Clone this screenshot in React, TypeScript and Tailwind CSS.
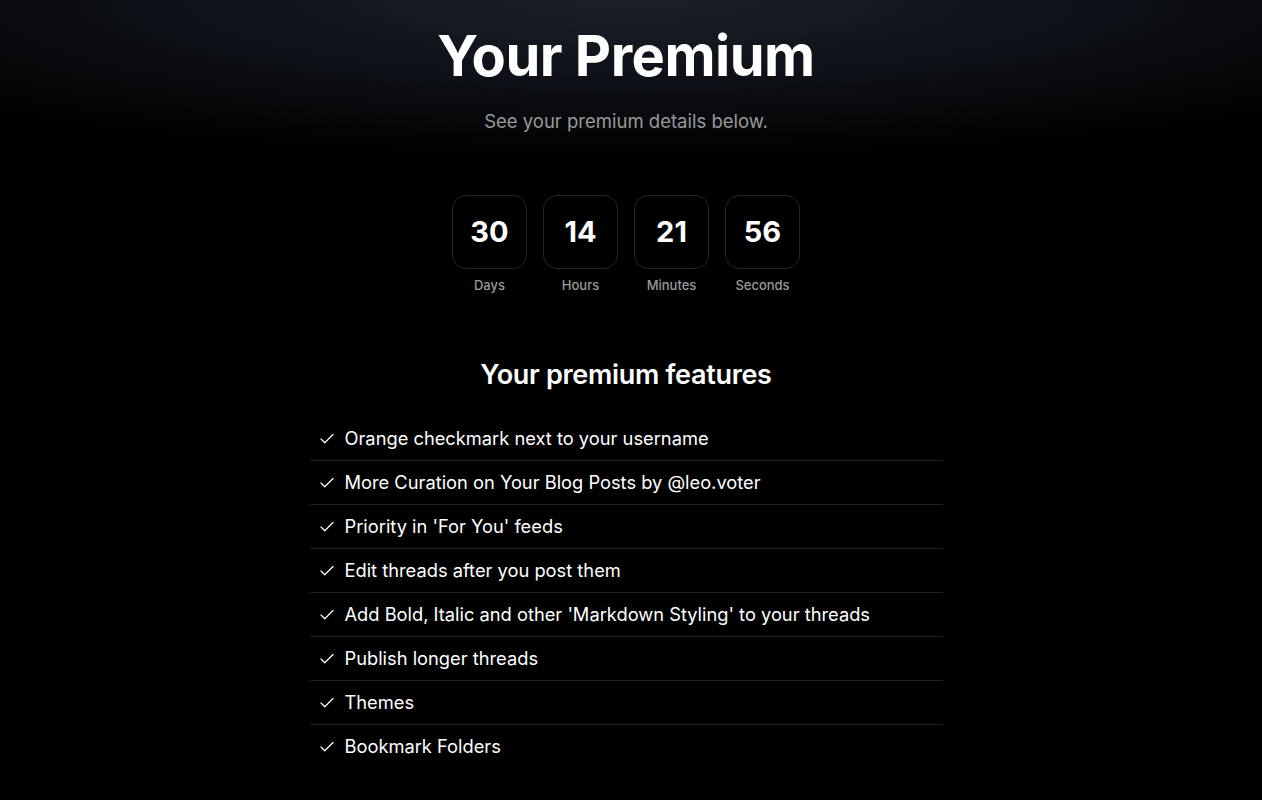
import React from "react";

const features = [
  "Orange checkmark next to your username",
  "More Curation on Your Blog Posts by @leo.voter",
  "Priority in 'For You' feeds",
  "Edit threads after you post them",
  "Add Bold, Italic and other 'Markdown Styling' to your threads",
  "Publish longer threads",
  "Themes",
  "Bookmark Folders",
];

const counts = [
  { v: "30", l: "Days" },
  { v: "14", l: "Hours" },
  { v: "21", l: "Minutes" },
  { v: "56", l: "Seconds" },
];

function Check() {
  return (
    <svg width="18" height="18" viewBox="0 0 24 24" fill="none" stroke="white" strokeWidth="1.6" strokeLinecap="round" strokeLinejoin="round">
      <path d="M20 6 9 17l-5-5" />
    </svg>
  );
}

export default function App() {
  return (
    <div className="min-h-[800px] w-full bg-black bg-[radial-gradient(ellipse_75%_160px_at_50%_0%,#1b2029_0%,#0c0f14_55%,#000_100%)] pr-[10px] font-['Inter',sans-serif] text-white">
      <div className="flex flex-col items-center pt-[22px]">
        <h1 className="text-[56px] font-bold leading-[68px] tracking-[-0.5px]">Your Premium</h1>
        <p className="mt-[17px] text-[18.5px] leading-[28px] text-[#9a9a9a]">See your premium details below.</p>

        <div className="mt-[60px] flex gap-[16px]">
          {counts.map((c) => (
            <div key={c.l} className="flex flex-col items-center">
              <div className="flex h-[74px] w-[75px] items-center justify-center rounded-[14px] border border-[#262626] bg-black text-[29px] font-bold">
                {c.v}
              </div>
              <div className="mt-[6px] text-[13px] font-medium leading-[20px] text-[#9a9a9a]">{c.l}</div>
            </div>
          ))}
        </div>

        <h2 className="mt-[62px] text-[27px] font-semibold leading-[36px] tracking-[-0.3px]">Your premium features</h2>

        <ul className="mt-[24px] w-[633px]">
          {features.map((f, i) => (
            <li
              key={f}
              className={`flex h-[44px] items-center gap-[9px] pl-[8px] text-[18.3px] ${i < features.length - 1 ? "border-b border-[#232323]" : ""}`}
            >
              <Check />
              <span>{f}</span>
            </li>
          ))}
        </ul>
      </div>
    </div>
  );
}
